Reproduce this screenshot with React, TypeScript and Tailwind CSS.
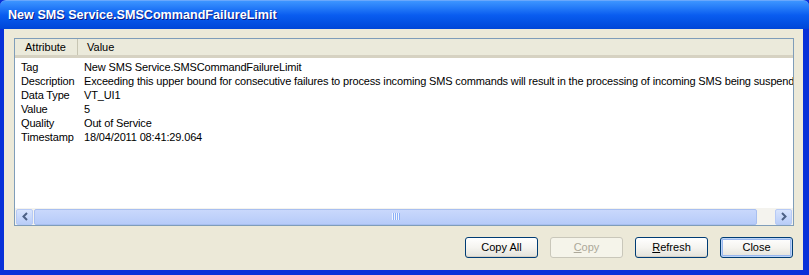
import React from 'react';

const rows = [
  { name: 'Tag', value: 'New SMS Service.SMSCommandFailureLimit' },
  {
    name: 'Description',
    value:
      'Exceeding this upper bound for consecutive failures to process incoming SMS commands will result in the processing of incoming SMS being suspended.',
  },
  { name: 'Data Type', value: 'VT_UI1' },
  { name: 'Value', value: '5' },
  { name: 'Quality', value: 'Out of Service' },
  { name: 'Timestamp', value: '18/04/2011 08:41:29.064' },
];

function XpButton({ children, disabled, isDefault }: { children: React.ReactNode; disabled?: boolean; isDefault?: boolean }) {
  if (disabled) {
    return (
      <button className="w-[73px] h-[21px] rounded-[3px] border border-[#C9C7BA] bg-[#F5F4EA] text-[#ACA899] text-[11px] leading-none">
        {children}
      </button>
    );
  }
  return (
    <button
      className={
        'w-[73px] h-[21px] rounded-[3px] border border-[#003C74] bg-gradient-to-b from-[#FFFFFF] via-[#F5F4F0] to-[#E3E2DA] text-black text-[11px] leading-none ' +
        (isDefault ? 'shadow-[inset_0_0_0_1px_#BCD4F6,inset_0_0_0_2px_#99B7EE]' : 'shadow-[inset_0_-1px_0_#D6D0C5]')
      }
    >
      {children}
    </button>
  );
}

function Chevron({ dir }: { dir: 'left' | 'right' }) {
  return (
    <svg width="8" height="9" viewBox="0 0 8 9">
      {dir === 'left' ? (
        <path d="M6 1 L2.5 4.5 L6 8" fill="none" stroke="#4D6185" strokeWidth="2" />
      ) : (
        <path d="M2 1 L5.5 4.5 L2 8" fill="none" stroke="#4D6185" strokeWidth="2" />
      )}
    </svg>
  );
}

export default function App() {
  return (
    <div
      className="w-[809px] h-[275px] flex flex-col bg-[#0831D9] overflow-hidden"
      style={{ fontFamily: '"Liberation Sans", Arial, sans-serif' }}
    >
      {/* title bar */}
      <div className="h-[29px] shrink-0 flex items-center pl-[8px] pt-[1px] rounded-t-[6px] bg-gradient-to-b from-[#3D95FF] via-[#0A5DF0] to-[#0046D8] border-t border-[#6AA8FC]">
        <span className="text-white font-bold text-[12.6px] [text-shadow:1px_1px_0_#0A1883]">
          New SMS Service.SMSCommandFailureLimit
        </span>
      </div>

      {/* body */}
      <div className="flex-1 flex flex-col ml-[4px] mr-[6px] mb-[5px] bg-[#ECE9D8] pl-[10px] pr-[9px] pt-[9px]">
        <div className="h-[188px] flex flex-col border border-[#7F9DB9] bg-white">
          {/* header */}
          <div className="h-[19px] shrink-0 flex items-center bg-[#EBEADB] border-b-[3px] border-[#D6D2C2] text-[11px] text-black">
            <div className="w-[63px] pl-[10px] h-full flex items-center border-r border-[#C7C5B2] my-[3px]">Attribute</div>
            <div className="pl-[9px]">Value</div>
          </div>
          {/* rows */}
          <div className="flex-1 overflow-hidden pt-[2px] text-[11px] tracking-[-0.15px] text-black">
            {rows.map((r) => (
              <div key={r.name} className="h-[14px] flex items-center whitespace-nowrap">
                <div className="w-[63px] shrink-0 pl-[6px]">{r.name}</div>
                <div className="pl-[6px]">{r.value}</div>
              </div>
            ))}
          </div>
          {/* horizontal scrollbar */}
          <div className="h-[17px] shrink-0 flex items-center bg-[#F4F3EE] px-[1px] gap-[1px]">
            <div className="w-[17px] h-[16px] rounded-[2px] border border-[#B7CAF5] bg-gradient-to-b from-[#D8E4FD] to-[#B9CDF8] flex items-center justify-center">
              <Chevron dir="left" />
            </div>
            <div className="w-[723px] h-[16px] rounded-[2px] border border-[#A8BFF0] bg-gradient-to-b from-[#C9D8FC] to-[#B6CBF9] flex items-center justify-center gap-[1px]">
              {[0, 1, 2, 3].map((i) => (
                <div key={i} className="w-[1px] h-[7px] bg-[#EEF4FE] shadow-[1px_0_0_#8CB0F8]" />
              ))}
            </div>
            <div className="flex-1" />
            <div className="w-[17px] h-[16px] rounded-[2px] border border-[#B7CAF5] bg-gradient-to-b from-[#D8E4FD] to-[#B9CDF8] flex items-center justify-center">
              <Chevron dir="right" />
            </div>
          </div>
        </div>

        {/* buttons */}
        <div className="flex justify-end gap-[12px] mt-[11px] pr-[1px]">
          <XpButton>Copy All</XpButton>
          <XpButton disabled>
            <span className="underline">C</span>opy
          </XpButton>
          <XpButton>
            <span className="underline">R</span>efresh
          </XpButton>
          <XpButton isDefault>Close</XpButton>
        </div>
      </div>
    </div>
  );
}
